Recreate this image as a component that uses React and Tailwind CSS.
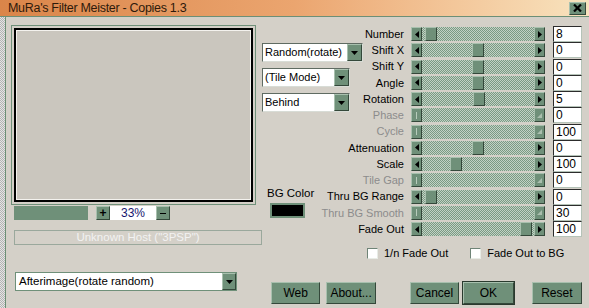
import React from "react";

const rows = [
  { label: "Number", pos: 3, value: "8", row: "row-start-1" },
  { label: "Shift X", pos: 50, value: "0", row: "row-start-2" },
  { label: "Shift Y", pos: 50, value: "0", row: "row-start-3" },
  { label: "Angle", pos: 50, value: "0", row: "row-start-4" },
  { label: "Rotation", pos: 51, value: "5", row: "row-start-5" },
  { label: "Phase", disabled: true, value: "0", row: "row-start-6" },
  { label: "Cycle", disabled: true, value: "100", row: "row-start-7" },
  { label: "Attenuation", pos: 50, value: "0", row: "row-start-8" },
  { label: "Scale", pos: 28, value: "100", row: "row-start-9" },
  { label: "Tile Gap", disabled: true, value: "0", row: "row-start-10" },
  { label: "Thru BG Range", pos: 3, value: "0", row: "row-start-11" },
  { label: "Thru BG Smooth", disabled: true, value: "30", row: "row-start-12" },
  { label: "Fade Out", pos: 98, value: "100", row: "row-start-13" },
];

const bevel =
  "bg-[#6f9079] border border-t-[#a8c0ae] border-l-[#a8c0ae] border-r-[#34483a] border-b-[#34483a]";

function Arrow({ dir, disabled }) {
  if (disabled) {
    return dir === "left" ? (
      <div className="w-[1px] h-[7px] bg-[#b8ccbc]" />
    ) : (
      <svg width="5" height="5" viewBox="0 0 5 5">
        <path d="M5 0 L5 5 L0 5 Z" fill="#a9bead" />
      </svg>
    );
  }
  return (
    <svg width="4" height="7" viewBox="0 0 4 7">
      {dir === "left" ? (
        <path d="M4 0 L0 3.5 L4 7 Z" fill="#000" />
      ) : (
        <path d="M0 0 L4 3.5 L0 7 Z" fill="#000" />
      )}
    </svg>
  );
}

function Slider({ pos, disabled }) {
  return (
    <div className="flex h-[14px] w-[134px]">
      <div className={`${bevel} w-[11px] flex items-center justify-center`}>
        <Arrow dir="left" disabled={disabled} />
      </div>
      <div className="relative flex-1 bg-[repeating-conic-gradient(#7a9a83_0%_25%,#c3d1c5_0%_50%)] bg-[length:2px_2px]">
        {!disabled && (
          <div
            className={`${bevel} absolute top-0 h-[14px] w-[12px]`}
            style={{ left: pos }}
          />
        )}
      </div>
      <div className={`${bevel} w-[11px] flex items-center justify-center`}>
        <Arrow dir="right" disabled={disabled} />
      </div>
    </div>
  );
}

function DownArrow() {
  return (
    <svg width="7" height="4" viewBox="0 0 7 4">
      <path d="M0 0 L7 0 L3.5 4 Z" fill="#000" />
    </svg>
  );
}

function Dropdown({ text, width }) {
  return (
    <div
      className={`${width} h-[19px] flex bg-white border border-t-[#5f6b62] border-l-[#5f6b62] border-r-[#d8dcd6] border-b-[#d8dcd6]`}
    >
      <div className="flex-1 pl-[2px] text-[11px] leading-[17px] text-black whitespace-nowrap overflow-hidden">
        {text}
      </div>
      <div className={`${bevel} w-[15px] flex items-center justify-center`}>
        <DownArrow />
      </div>
    </div>
  );
}

function Button({ children, className = "", def }) {
  return (
    <div
      className={`${className} h-[22px] flex items-center justify-center text-[12px] text-black ${
        def ? "outline outline-1 outline-[#2a3a2e]" : ""
      } ${bevel}`}
    >
      {children}
    </div>
  );
}

function Checkbox({ label }) {
  return (
    <div className="flex items-center gap-[6px] shrink-0 whitespace-nowrap">
      <div className="w-[11px] h-[11px] bg-white border border-t-[#6f8477] border-l-[#6f8477] border-r-[#e8ece6] border-b-[#e8ece6]" />
      <span className="text-[11px] text-black">{label}</span>
    </div>
  );
}

export default function App() {
  return (
    <div className="w-[589px] h-[308px] overflow-hidden bg-[#d4d0c8] font-[family-name:Liberation_Sans,Arial,sans-serif] flex flex-col">
      <div className="h-[16px] flex items-center justify-between bg-gradient-to-r from-[#da8549] via-[#eba56f] to-[#f8e3be] pl-[8px] pr-[3px] border-b border-[#6c8f76] box-content">
        <span className="text-[12.5px] tracking-[-0.3px] text-[#2e1a0b] leading-none">
          MuRa's Filter Meister - Copies 1.3
        </span>
        <div className={`${bevel} w-[17px] h-[13px] flex items-center justify-center`}>
          <svg width="9" height="8" viewBox="0 0 9 8">
            <path d="M1 0.5 L8 7.5 M8 0.5 L1 7.5" stroke="#000" strokeWidth="2.2" />
          </svg>
        </div>
      </div>

      <div className="flex flex-1">
        <div className="w-[5px] bg-[repeating-conic-gradient(#b4b4b4_0%_25%,#e4e4e4_0%_50%)] bg-[length:2px_2px] border-r border-[#6c8f76] box-content" />

        {/* left column */}
        <div className="w-[251px] ml-[5px] pt-[8px] flex flex-col">
          <div className="w-[245px] h-[180px] border border-[#6f9079] p-[2px]">
            <div className="w-full h-full border-2 border-black">
              <div className="w-full h-full border border-[#f4f2ee] bg-[#cac6be]" />
            </div>
          </div>
          <div className="mt-[1px] ml-[3px] flex h-[14px]">
            <div className="w-[74px] bg-[#6f9079]" />
            <div className={`${bevel} ml-[8px] w-[14px] flex items-center justify-center text-[12px] font-bold leading-none`}>
              +
            </div>
            <div className="w-[46px] bg-white text-center text-[12px] leading-[14px] text-[#16166e]">
              33%
            </div>
            <div className={`${bevel} w-[14px] flex items-center justify-center`}>
              <div className="w-[6px] h-[1px] bg-black" />
            </div>
          </div>
          <div className="mt-[10px] ml-[3px] w-[248px] h-[15px] border border-[#9aa89c] flex items-center justify-center text-[11.5px] text-[#f2f2f2]">
            Unknown Host ("3PSP")
          </div>
          <div className="mt-[27px] ml-[4px]">
            <div className="w-[222px] h-[19px] border border-[#6f9079] flex bg-white">
              <div className="flex-1 pl-[3px] text-[11.5px] leading-[17px] text-black">
                Afterimage(rotate random)
              </div>
              <div className={`${bevel} w-[14px] flex items-center justify-center`}>
                <DownArrow />
              </div>
            </div>
          </div>
        </div>

        {/* right area */}
        <div className="pt-[9px] grid grid-cols-[142px_134px_30px] grid-rows-[repeat(13,16.25px)_auto_auto] gap-x-[7px] content-start">
          {rows.map((r) => (
            <React.Fragment key={r.label}>
              <div
                className={`${r.row} col-start-1 flex items-center justify-end text-[11px] whitespace-nowrap ${
                  r.disabled ? "text-[#8c8c8c]" : "text-black"
                }`}
              >
                {r.label}
              </div>
              <div className={`${r.row} col-start-2 flex items-center`}>
                <Slider pos={r.pos} disabled={r.disabled} />
              </div>
              <div className={`${r.row} col-start-3 flex items-center ml-[1px]`}>
                <div className="w-[30px] h-[16px] bg-white border border-t-[#2c2c2c] border-l-[#2c2c2c] border-r-[#b5c3b8] border-b-[#b5c3b8] pl-[2px] text-[12px] leading-[14px] text-black">
                  {r.value}
                </div>
              </div>
            </React.Fragment>
          ))}

          <div className="col-start-1 row-start-2 row-span-5 flex flex-col gap-[6px] pt-[1px]">
            <Dropdown text="Random(rotate)" width="w-[101px]" />
            <Dropdown text="(Tile Mode)" width="w-[88px]" />
            <Dropdown text="Behind" width="w-[88px]" />
          </div>

          <div className="col-start-1 row-start-10 row-span-4 pt-[14px] pl-[5px] flex flex-col items-start">
            <span className="text-[11.5px] text-black leading-[14px]">BG Color</span>
            <div className="mt-[3px] ml-[3px] w-[35px] h-[15px] bg-black border-2 border-[#6f9079]" />
          </div>

          <div className="col-start-1 col-span-3 row-start-14 mt-[9px] pl-[105px] flex items-center gap-[22px] h-[14px]">
            <Checkbox label="1/n Fade Out" />
            <Checkbox label="Fade Out to BG" />
          </div>

          <div className="col-start-1 col-span-3 row-start-15 mt-[22px] pl-[9px] flex">
            <Button className="w-[50px]">Web</Button>
            <Button className="w-[50px] ml-[6px]">About...</Button>
            <Button className="w-[50px] ml-[34px]">Cancel</Button>
            <Button className="w-[51px] ml-[4px]" def>
              OK
            </Button>
            <Button className="w-[51px] ml-[18px]">Reset</Button>
          </div>
        </div>
      </div>
    </div>
  );
}
